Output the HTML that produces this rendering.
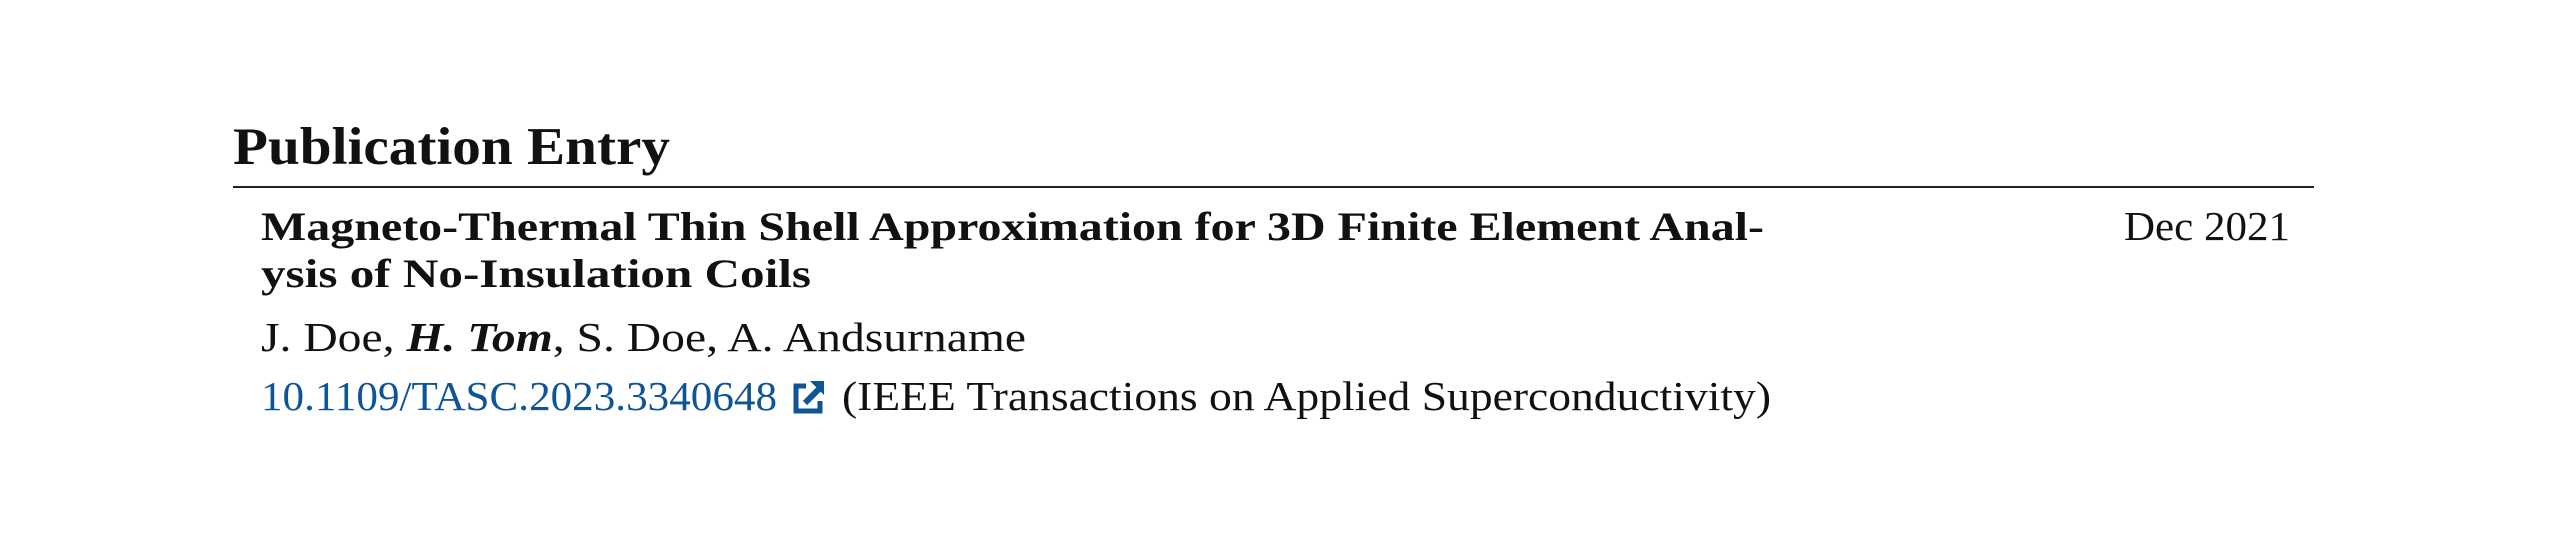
<!DOCTYPE html>
<html><head><meta charset="utf-8"><style>
html,body{margin:0;padding:0;background:#fff;width:2550px;height:546px;overflow:hidden}
svg{display:block}
text{font-family:"Liberation Serif",serif}
</style></head><body>
<svg width="2550" height="546" viewBox="0 0 2550 546" xmlns="http://www.w3.org/2000/svg">
<rect width="2550" height="546" fill="#fff"/>
<text x="233" y="164" font-size="53" font-weight="bold" textLength="437" lengthAdjust="spacingAndGlyphs" fill="#111">Publication Entry</text>
<rect x="233" y="186" width="2081" height="2" fill="#222"/>
<text x="261" y="240" font-size="40" font-weight="bold" textLength="1503" lengthAdjust="spacingAndGlyphs" fill="#111">Magneto-Thermal Thin Shell Approximation for 3D Finite Element Anal-</text>
<text x="261" y="287" font-size="40" font-weight="bold" textLength="550" lengthAdjust="spacingAndGlyphs" fill="#111">ysis of No-Insulation Coils</text>
<text x="2124" y="240" font-size="41" textLength="166" lengthAdjust="spacingAndGlyphs" fill="#111">Dec 2021</text>
<text x="261" y="351" font-size="41" textLength="765" lengthAdjust="spacingAndGlyphs" fill="#111">J. Doe, <tspan font-weight="bold" font-style="italic">H.  Tom</tspan>, S. Doe, A. Andsurname</text>
<text x="261" y="410" font-size="41" textLength="516" lengthAdjust="spacingAndGlyphs" fill="#0f5596">10.1109/TASC.2023.3340648</text>
<g fill="none" stroke="#0f5596" stroke-width="5">
<path d="M806 386 H796 V411 H820 V401"/>
<path d="M805 403 L819 389" stroke-width="6"/>
</g>
<path d="M810 381 H824 V395 Z" fill="#0f5596"/>
<text x="842" y="410" font-size="41" textLength="929" lengthAdjust="spacingAndGlyphs" fill="#111">(IEEE Transactions on Applied Superconductivity)</text>
</svg>
</body></html>
